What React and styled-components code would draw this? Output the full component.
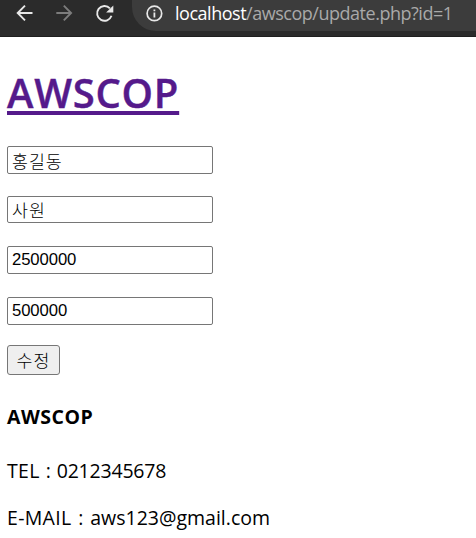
import React, { useState } from 'react'
import styled, { createGlobalStyle } from 'styled-components'

const GlobalStyle = createGlobalStyle`
  * {
    box-sizing:border-box;
  }
  body {
    margin:0;
    background:#fff;
    color:#000;
    font-family:"Open Sans", "Noto Sans CJK KR", sans-serif;
    overflow:hidden;
  }
`
const StToolbar = styled.header`
  display:flex;
  height:37px;
  background:#2b2b2b;
  border-bottom:1px solid #1f1f1f;
`
const StNav = styled.div`
  display:flex;
  flex:none;
  width:132px;
  height:26px;
  padding-left:12px;
  gap:16px;
  align-items:center;
`
const StIcon = styled.svg`
  display:block;
  flex:none;
  width:24px;
  height:24px;
  fill:#e8e8e8;
`
const StStroke = styled.path`
  fill:none;
  stroke:${({ $color }) => $color || '#e8e8e8'};
  stroke-width:1.9;
`
const StAddress = styled.div`
  display:flex;
  flex:1;
  height:31px;
  padding:0 0 5px 10px;
  align-items:center;
  background:#3c3c3c;
  border-radius:0 0 0 24px;
`
const StUrl = styled.span`
  margin-left:9px;
  padding-top:1px;
  font-size:18px;
  line-height:25px;
  letter-spacing:-0.48px;
  white-space:nowrap;
  color:#a9a9a9;
`
const StHost = styled.span`
  color:#fff;
`
const StPage = styled.main`
  padding:28px 7px 0;
`
const StTitle = styled.h1`
  margin:0;
  font-size:40px;
  font-weight:600;
  line-height:56px;
  letter-spacing:0.75px;
`
const StLink = styled.a`
  color:#551a8b;
  -webkit-text-stroke:0.4px #551a8b;
  text-decoration:underline;
  text-decoration-thickness:4px;
  text-underline-offset:3px;
  text-decoration-skip-ink:none;
`
const StForm = styled.form`
  display:flex;
  flex-direction:column;
  align-items:flex-start;
  margin-top:25px;
`
const StInput = styled.input`
  width:206px;
  height:${({ $height }) => $height || '28px'};
  margin:0 0 ${({ $gap }) => $gap};
  padding:0 4px;
  border:1px solid #767676;
  border-radius:2px;
  outline:none;
  background:#fff;
  color:#000;
  font-family:"Liberation Sans", "Noto Sans CJK KR", sans-serif;
  font-size:${({ $korean }) => $korean ? '17.3px' : '16.7px'};
  font-weight:${({ $korean }) => $korean ? 300 : 400};
  letter-spacing:${({ $korean }) => $korean ? '1px' : '-0.1px'};
`
const StButton = styled.button`
  width:53px;
  height:30px;
  padding:0;
  border:1px solid #767676;
  border-radius:3px;
  background:#efefef;
  color:#000;
  font-family:"Noto Sans CJK KR", sans-serif;
  font-size:17.3px;
  font-weight:300;
  line-height:26px;
  letter-spacing:1px;
`
const StFooter = styled.footer`
  margin-top:28px;
`
const StName = styled.h4`
  margin:0 0 26px;
  font-size:19.5px;
  font-weight:700;
  line-height:28px;
  letter-spacing:0.5px;
`
const StInfo = styled.p`
  margin:0 0 19px;
  font-size:19.5px;
  line-height:28px;
  letter-spacing:${({ $spacing }) => $spacing || '0'};
  word-spacing:${({ $wordSpacing }) => $wordSpacing || '1.5px'};
  white-space:nowrap;
`
const StLabel = styled.span`
  letter-spacing:0.3px;
`

const App=()=> {
  const [employee, setEmployee] = useState({
    name: '홍길동',
    position: '사원',
    salary: '2500000',
    bonus: '500000',
  })

  const onChange = (e) => {
    setEmployee({ ...employee, [e.target.name]: e.target.value })
  }

  return (
    <>
      <GlobalStyle />
      <StToolbar>
        <StNav>
          <StIcon viewBox='0 0 24 24'>
            <StStroke d='M20.5 12H5.5M13 4.7L5.7 12L13 19.3' />
          </StIcon>
          <StIcon viewBox='0 0 24 24'>
            <StStroke $color='#7c7c7c' d='M4.3 12H19.2M11.8 4.7L19.1 12L11.8 19.3' />
          </StIcon>
          <StIcon viewBox='0 0 24 24'>
            <StStroke d='M19.5 14.8A7.4 7.4 0 1 1 17.9 7.3' />
            <path d='M21.3 4.4V11.5H14.1z' />
          </StIcon>
        </StNav>
        <StAddress>
          <StIcon viewBox='0 0 24 24'>
            <circle cx='12.4' cy='12.4' r='7.3' fill='none' stroke='#e8e8e8' strokeWidth='1.7' />
            <path d='M11.5 8.4h1.8v1.8h-1.8zM11.5 11.4h1.8v5h-1.8z' />
          </StIcon>
          <StUrl><StHost>localhost</StHost>/awscop/update.php?id=1</StUrl>
        </StAddress>
      </StToolbar>
      <StPage>
        <StTitle><StLink href='#'>AWSCOP</StLink></StTitle>
        <StForm onSubmit={(e) => e.preventDefault()}>
          <StInput name='name' value={employee.name} onChange={onChange} $korean $gap='22px' />
          <StInput name='position' value={employee.position} onChange={onChange} $korean $height='27px' $gap='23px' />
          <StInput name='salary' value={employee.salary} onChange={onChange} $gap='23px' />
          <StInput name='bonus' value={employee.bonus} onChange={onChange} $gap='20px' />
          <StButton>수정</StButton>
        </StForm>
        <StFooter>
          <StName>AWSCOP</StName>
          <StInfo $spacing='-0.2px' $wordSpacing='0.7px'><StLabel>TEL :</StLabel> 0212345678</StInfo>
          <StInfo><StLabel>E-MAIL :</StLabel> aws123@gmail.com</StInfo>
        </StFooter>
      </StPage>
    </>
  )
}

export default App
